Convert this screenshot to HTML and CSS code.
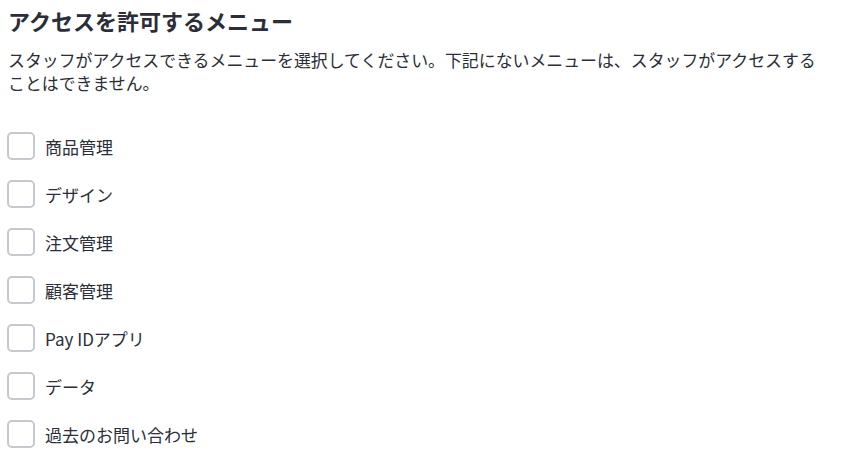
FILE: index.html
```html
<!DOCTYPE html>
<html lang="ja">
<head>
<meta charset="utf-8">
<link rel="stylesheet" href="styles.css">
</head>
<body>
<div class="panel">
  <h2 class="title">アクセスを許可するメニュー</h2>
  <p class="desc">スタッフがアクセスできるメニューを選択してください。下記にないメニューは、スタッフがアクセスすることはできません。</p>
  <ul class="menu-list">
    <li class="menu-item"><span class="box"></span><span class="label">商品管理</span></li>
    <li class="menu-item"><span class="box"></span><span class="label">デザイン</span></li>
    <li class="menu-item"><span class="box"></span><span class="label">注文管理</span></li>
    <li class="menu-item"><span class="box"></span><span class="label">顧客管理</span></li>
    <li class="menu-item"><span class="box"></span><span class="label">Pay IDアプリ</span></li>
    <li class="menu-item"><span class="box"></span><span class="label">データ</span></li>
    <li class="menu-item"><span class="box"></span><span class="label">過去のお問い合わせ</span></li>
  </ul>
</div>
</body>
</html>
```
FILE: styles.css
```css
* { box-sizing: border-box; }
html, body { margin: 0; padding: 0; background: #fff; }
body {
  font-family: "Noto Sans CJK JP", "Noto Sans", sans-serif;
  color: #2b2e38;
}
.panel {
  padding: 6px 8px 0 8px;
  width: 840px;
}
.title {
  margin: 0;
  font-size: 22px;
  font-weight: 700;
  line-height: 28px;
}
.desc {
  margin: 14px 0 0 0;
  max-width: 820px;
  font-size: 16.9px;
  line-height: 23px;
}
.menu-list {
  list-style: none;
  margin: 38px 0 0 0;
  padding: 0;
  display: flex;
  flex-direction: column;
  gap: 20px;
}
.menu-item {
  display: flex;
  align-items: center;
  gap: 10px;
  height: 28px;
}
.box {
  width: 28px;
  height: 28px;
  border: 2px solid #c6c9d0;
  border-radius: 5px;
  margin-left: -1px;
  flex: none;
}
.label {
  font-size: 17px;
}
```
